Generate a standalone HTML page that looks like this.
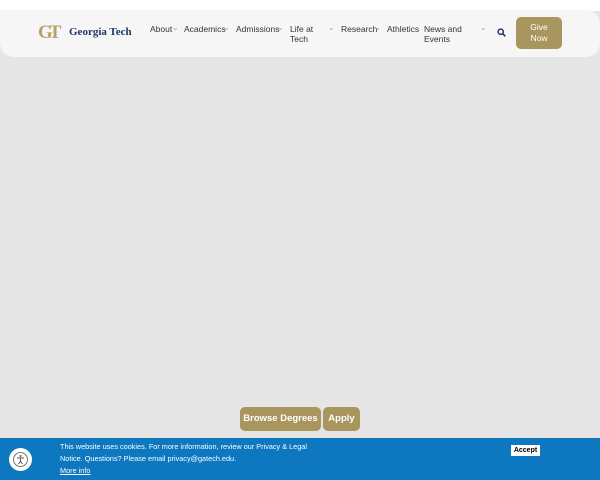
<!DOCTYPE html>
<html><head><style>
*{margin:0;padding:0;box-sizing:border-box}
body{width:600px;height:480px;overflow:hidden;background:#e5e5e5;font-family:"Liberation Sans",Arial,sans-serif;position:relative}
.top{position:absolute;left:0;top:0;width:600px;height:11px;background:#fff}
.hdr{position:absolute;left:0;top:10px;width:600px;height:47px;background:#f6f6f6;border-radius:0 14px 14px 14px}
.logo{position:absolute;left:38px;top:22px;font:bold 19px "Liberation Serif",serif;color:#b3a369;letter-spacing:-4px}
.lt{position:absolute;left:69px;top:26px;font:bold 11px "Liberation Serif",serif;color:#1f3566}
.n{position:absolute;font-size:8.5px;color:#333;line-height:10px}
.c{position:absolute;font-size:8px;color:#b3a369;top:23px}
.give{position:absolute;left:516px;top:17px;width:46px;height:32px;background:#a8965e;border-radius:5px;color:#fff;font-size:8.5px;text-align:center;line-height:11px;padding-top:5px}
.btn{position:absolute;top:407px;height:24px;background:#a8965e;border-radius:5px;color:#fff;font-size:9.5px;font-weight:bold;line-height:24px;text-align:center}
.ck{position:absolute;left:0;top:438px;width:600px;height:42px;background:#0d77c0;color:#fff;font-size:7.3px}
.ck p{position:absolute;left:60px}
.acc{position:absolute;left:511px;top:7px;width:29px;height:11px;background:#fff;color:#000;font-size:7px;font-weight:bold;text-align:center;line-height:11px}
.a11y{position:absolute;left:9px;top:10px;width:23px;height:23px;border-radius:50%;background:#fff}
</style></head><body>
<div class="top"></div>
<div class="hdr"></div>
<div class="logo">GT</div>
<div class="lt">Georgia Tech</div>
<div class="n" style="left:150px;top:24px">About</div><div class="c" style="left:172px">⌄</div>
<div class="n" style="left:184px;top:24px">Academics</div><div class="c" style="left:223px">⌄</div>
<div class="n" style="left:236px;top:24px">Admissions</div><div class="c" style="left:277px">⌄</div>
<div class="n" style="left:290px;top:24px">Life at<br>Tech</div><div class="c" style="left:328px">⌄</div>
<div class="n" style="left:341px;top:24px">Research</div><div class="c" style="left:374px">⌄</div>
<div class="n" style="left:387px;top:24px">Athletics</div>
<div class="n" style="left:424px;top:24px">News and<br>Events</div><div class="c" style="left:480px">⌄</div>
<svg style="position:absolute;left:497px;top:28px" width="9" height="9" viewBox="0 0 9 9"><circle cx="3.7" cy="3.7" r="2.6" fill="none" stroke="#1f3566" stroke-width="1.5"/><path d="M5.6 5.6L8.3 8.3" stroke="#1f3566" stroke-width="1.6"/></svg>
<div class="give">Give<br>Now</div>
<div class="btn" style="left:240px;width:81px">Browse Degrees</div>
<div class="btn" style="left:323px;width:37px">Apply</div>
<div class="ck">
<div class="a11y"><svg width="23" height="23" viewBox="0 0 23 23"><circle cx="11.5" cy="11.5" r="7" fill="none" stroke="#555" stroke-width="0.8"/><circle cx="11.5" cy="8" r="1" fill="#555"/><path d="M8 10h7M11.5 10v3l-2 3M11.5 13l2 3" stroke="#555" stroke-width="0.9" fill="none"/></svg></div>
<p style="top:4px">This website uses cookies. For more information, review our Privacy &amp; Legal</p>
<p style="top:16px">Notice. Questions? Please email privacy@gatech.edu.</p>
<p style="top:28px;text-decoration:underline">More info</p>
<div class="acc">Accept</div>
</div>
</body></html>
